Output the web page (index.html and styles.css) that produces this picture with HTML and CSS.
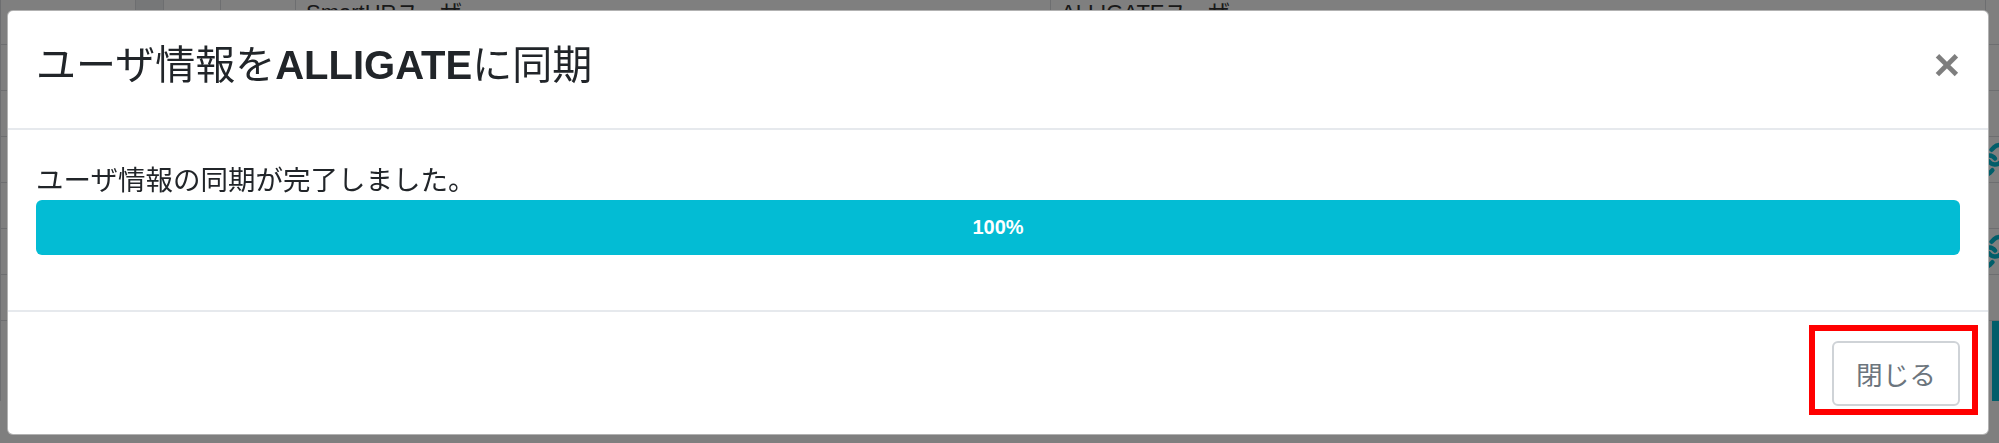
FILE: index.html
```html
<!DOCTYPE html>
<html lang="ja">
  <head>
    <meta charset="UTF-8" />
    <meta name="viewport" content="width=device-width, initial-scale=1.0" />
    <title>ユーザ同期</title>
    <link rel="stylesheet" href="styles.css">
  </head>
  <body>
  <!-- page behind the dialog -->
  <div class="page">
    <div class="page-row page-head">
      <div class="cell"></div>
      <div class="cell cell-check"></div>
      <div class="cell"></div>
      <div class="cell"></div>
      <div class="cell th">SmartHRユーザ</div>
      <div class="cell th">ALLIGATEユーザ</div>
      <div class="cell"></div>
    </div>
    <div class="page-row">
      <div class="cell"></div><div class="cell cell-check"></div><div class="cell"></div><div class="cell"></div><div class="cell"></div><div class="cell"></div><div class="cell"></div>
    </div>
    <div class="page-row">
      <div class="cell"></div><div class="cell cell-check"></div><div class="cell"></div><div class="cell"></div><div class="cell"></div><div class="cell"></div><div class="cell"></div>
    </div>
    <div class="page-row">
      <div class="cell"></div><div class="cell cell-check"></div><div class="cell"></div><div class="cell"></div><div class="cell"></div><div class="cell"></div>
      <div class="cell cell-link">
        <svg class="link-icon" viewBox="0 0 24 24"><path d="M10 13a5 5 0 0 0 7.54.54l3-3a5 5 0 0 0-7.07-7.07l-1.72 1.71"/><path d="M14 11a5 5 0 0 0-7.54-.54l-3 3a5 5 0 0 0 7.07 7.07l1.71-1.71"/></svg>
      </div>
    </div>
    <div class="page-row">
      <div class="cell"></div><div class="cell cell-check"></div><div class="cell"></div><div class="cell"></div><div class="cell"></div><div class="cell"></div><div class="cell"></div>
    </div>
    <div class="page-row">
      <div class="cell"></div><div class="cell cell-check"></div><div class="cell"></div><div class="cell"></div><div class="cell"></div><div class="cell"></div>
      <div class="cell cell-link">
        <svg class="link-icon" viewBox="0 0 24 24"><path d="M10 13a5 5 0 0 0 7.54.54l3-3a5 5 0 0 0-7.07-7.07l-1.72 1.71"/><path d="M14 11a5 5 0 0 0-7.54-.54l-3 3a5 5 0 0 0 7.07 7.07l1.71-1.71"/></svg>
      </div>
    </div>
    <div class="page-row">
      <div class="cell"></div><div class="cell cell-check"></div><div class="cell"></div><div class="cell"></div><div class="cell"></div><div class="cell"></div><div class="cell"></div>
    </div>
    <div class="page-row page-tools">
      <div class="cell"></div><div class="cell cell-check"></div><div class="cell"></div><div class="cell"></div><div class="cell"></div><div class="cell"></div>
      <div class="cell"><div class="sync-btn"></div></div>
    </div>
  </div>

  <div class="backdrop"></div>

  <div class="modal">
    <div class="modal-header">
      <h4 class="modal-title">ユーザ情報を<b>ALLIGATE</b>に同期</h4>
      <button class="close">×</button>
    </div>
    <div class="modal-body">
      <p class="sync-msg">ユーザ情報の同期が完了しました。</p>
      <div class="progress">
        <div class="progress-bar" style="width: 100%">100%</div>
      </div>
    </div>
    <div class="modal-footer">
      <button class="btn-close">閉じる</button>
      <div class="mark"></div>
    </div>
  </div>
  </body>
</html>
```

FILE: styles.css
```css
html, body {
  margin: 0;
  overflow: hidden;
}
body {
  width: 1999px;
  height: 443px;
  background: #fff;
  color: #222;
  font-family: "Liberation Sans", "Noto Sans CJK JP", sans-serif;
}

/* page behind */
.page {
  width: 1999px;
}
.page-row {
  display: grid;
  grid-template-columns: 135px 28px 57px 75px 755px 935px 14px;
  height: 46px;
  box-sizing: border-box;
  border-bottom: 1px solid #dadde1;
}
.page-head {
  margin-top: -4px;
  height: 49px;
}
.page-tools {
  height: 80px;
  border-bottom: 0;
}
.cell {
  border-left: 1px solid #dadde1;
}
.cell-check {
  background: #eceef0;
}
.th {
  padding-left: 10px;
  font-size: 22px;
  line-height: 33px;
  color: #333;
}
.cell-link {
  display: flex;
  align-items: center;
}
.link-icon {
  width: 36px;
  height: 36px;
  flex: none;
  margin-left: -12px;
  fill: none;
  stroke: #03bcd4;
  stroke-width: 3;
  stroke-linecap: round;
}
.sync-btn {
  height: 80px;
  margin-left: 6px;
  background: #03bcd4;
}

.backdrop {
  position: fixed;
  top: 0;
  left: 0;
  right: 0;
  bottom: 0;
  background: rgba(0, 0, 0, 0.5);
}

/* dialog */
.modal {
  position: fixed;
  top: 10px;
  left: 7px;
  width: 1982px;
  height: 425px;
  box-sizing: border-box;
  display: flex;
  flex-direction: column;
  background: #fff;
  border: 1px solid rgba(0, 0, 0, 0.3);
  border-radius: 6px;
}
.modal-header {
  height: 119px;
  box-sizing: border-box;
  padding: 0 28px 10px;
  display: flex;
  align-items: center;
  justify-content: space-between;
  border-bottom: 2px solid #e6e9ed;
}
.modal-title {
  margin: 0;
  font-size: 40px;
  font-weight: 400;
  line-height: 1.2;
  color: #212529;
}
.modal-title b {
  font-weight: 700;
}
.close {
  padding: 0;
  border: 0;
  background: none;
  font-family: "Liberation Sans", sans-serif;
  font-size: 45px;
  font-weight: 700;
  line-height: 1;
  color: #000;
  opacity: 0.5;
}
.modal-body {
  padding: 31px 28px 55px;
}
.sync-msg {
  margin: 0;
  font-size: 27.5px;
  line-height: 39px;
  color: #212529;
}
.progress {
  display: flex;
  height: 55px;
  background: #e9ecef;
  border-radius: 6px;
  overflow: hidden;
}
.progress-bar {
  display: flex;
  align-items: center;
  justify-content: center;
  background: #03bcd4;
  color: #fff;
  font-size: 20px;
  font-weight: 700;
}
.modal-footer {
  position: relative;
  flex: 1;
  padding: 0 28px;
  display: flex;
  align-items: center;
  justify-content: flex-end;
  border-top: 2px solid #e6e9ed;
}
.btn-close {
  width: 128px;
  height: 65px;
  padding: 0;
  background: #fff;
  border: 2px solid #cfd3d7;
  border-radius: 6px;
  color: #6c757d;
  font-family: "Liberation Sans", "Noto Sans CJK JP", sans-serif;
  font-size: 26.7px;
}
/* red annotation frame */
.mark {
  position: absolute;
  top: 13px;
  right: 10px;
  width: 169px;
  height: 90px;
  box-sizing: border-box;
  border: 6px solid #f00;
}
```
